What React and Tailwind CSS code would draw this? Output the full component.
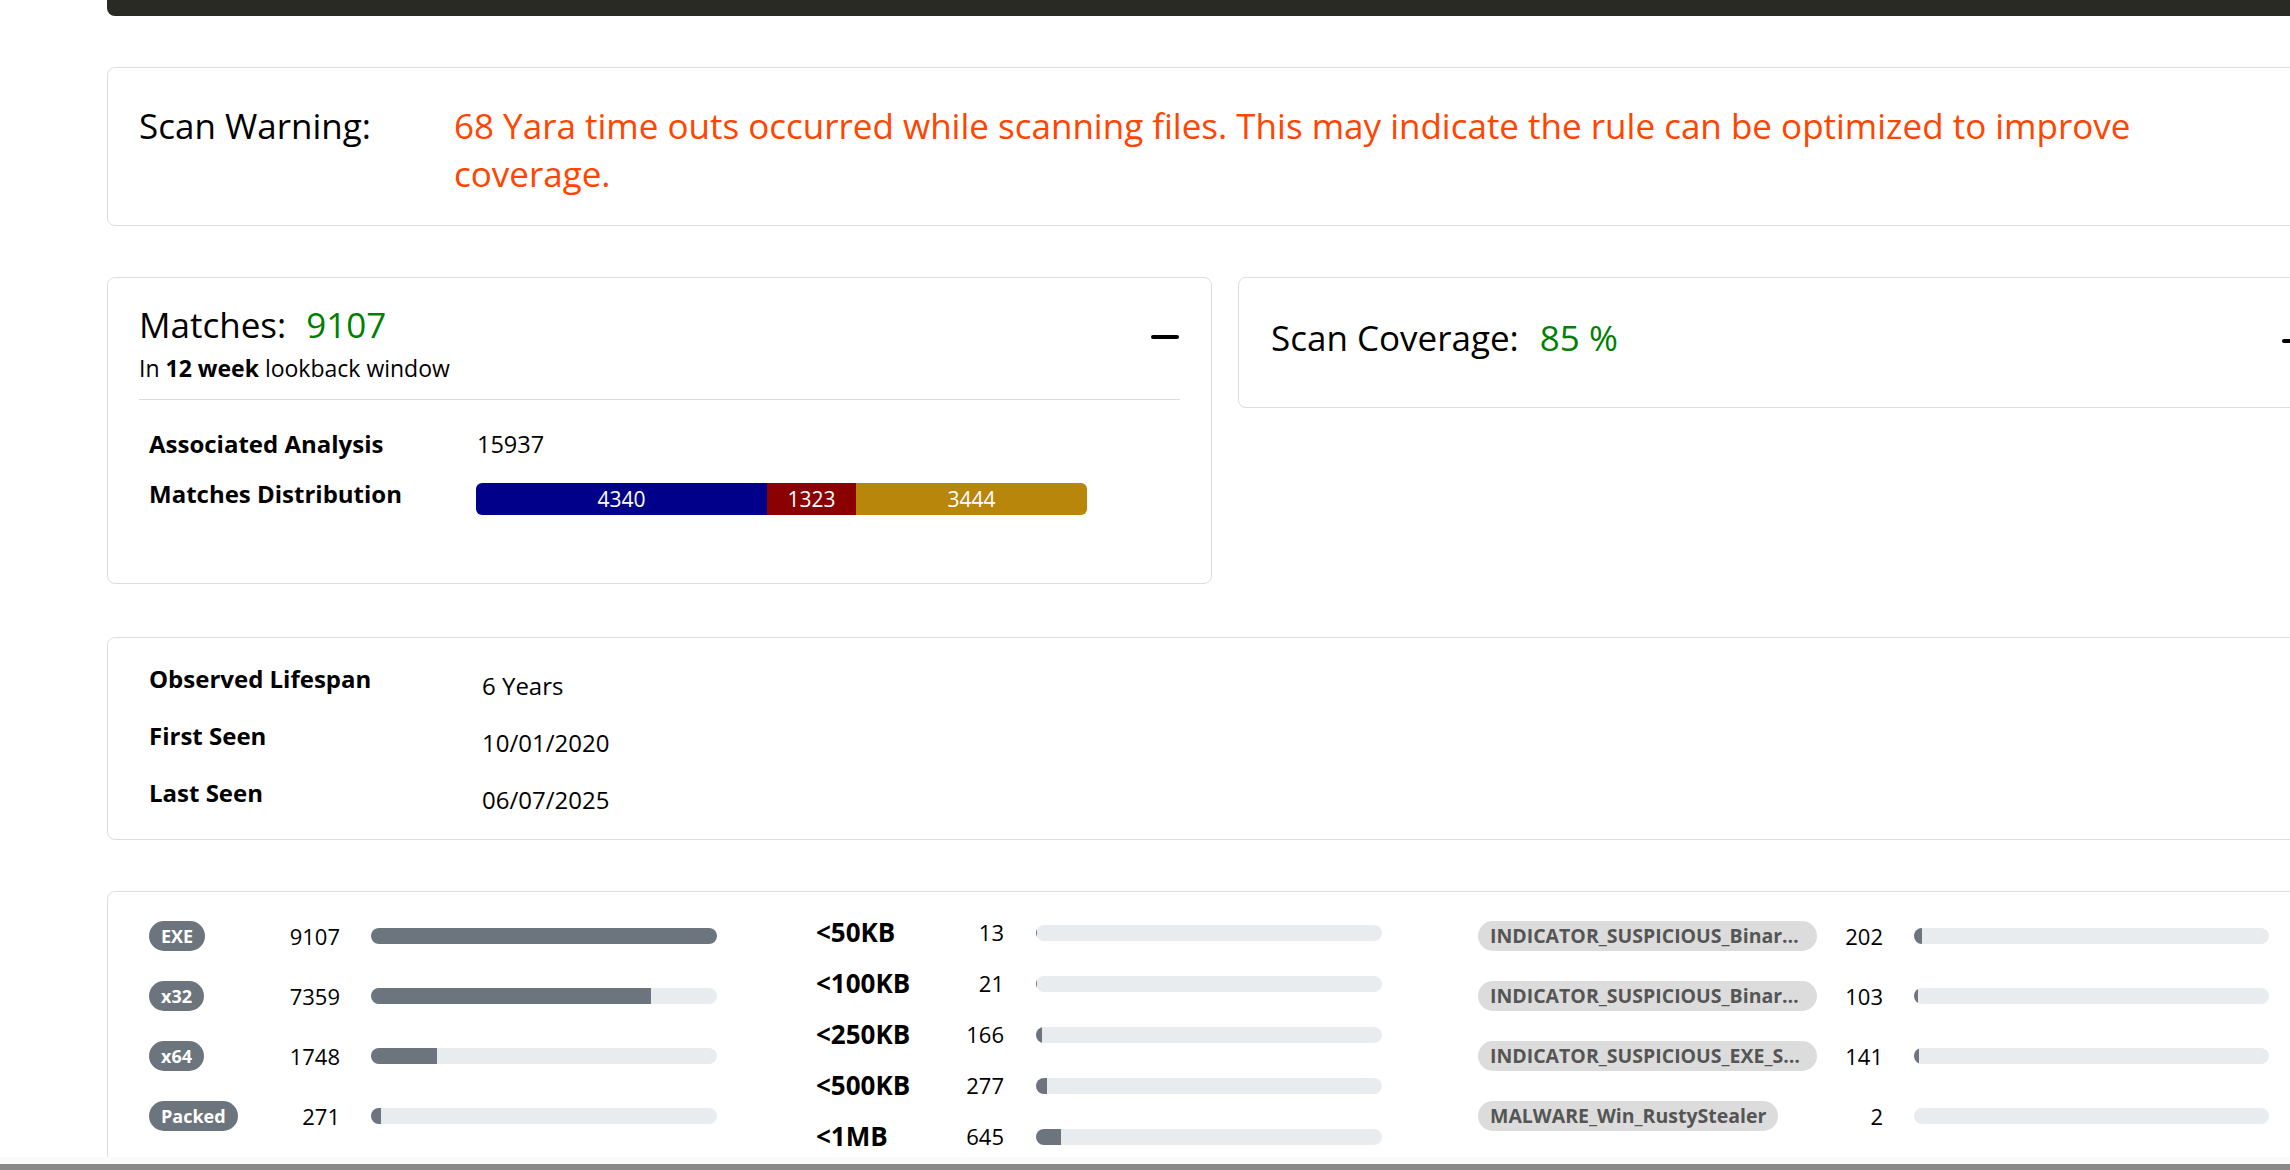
import React from 'react';

const fileTypes = [
  { name: 'EXE', count: 9107 },
  { name: 'x32', count: 7359 },
  { name: 'x64', count: 1748 },
  { name: 'Packed', count: 271 },
];

const sizes = [
  { name: '<50KB', count: 13 },
  { name: '<100KB', count: 21 },
  { name: '<250KB', count: 166 },
  { name: '<500KB', count: 277 },
  { name: '<1MB', count: 645 },
];

const rules = [
  { name: 'INDICATOR_SUSPICIOUS_Binary_References_Browsers', count: 202 },
  { name: 'INDICATOR_SUSPICIOUS_Binary_References_Crypto_Wallets', count: 103 },
  { name: 'INDICATOR_SUSPICIOUS_EXE_SQLQuery_ConfidentialDataStore', count: 141 },
  { name: 'MALWARE_Win_RustyStealer', count: 2 },
];

const TOTAL = 9107;

function Progress({ value, width }) {
  return (
    <div className="h-[16px] overflow-hidden rounded-full bg-[#e9ecef]" style={{ width }}>
      <div className="h-full bg-[#6c757d]" style={{ width: `${(value / TOTAL) * 100}%` }} />
    </div>
  );
}

function DashIcon() {
  return (
    <svg width="28" height="4" viewBox="0 0 28 4" className="block">
      <line x1="2" y1="2" x2="26" y2="2" stroke="#000" strokeWidth="4" strokeLinecap="round" />
    </svg>
  );
}

const card = 'rounded-[8px] border border-[#dedede] bg-white';

export default function App() {
  return (
    <div className="flex h-[1170px] w-full flex-col overflow-hidden bg-white font-['Open_Sans',sans-serif] text-black">
      <div className="h-[1157px] overflow-hidden">
        <div className="ml-[107px] w-[2236px]">
          {/* navbar tail */}
          <div className="h-[16px] rounded-b-[8px] bg-[#2a2a24]" />

          {/* scan warning */}
          <div className={`${card} mt-[51px] flex h-[159px] px-[31px] pt-[34px]`}>
            <div className="w-[315px] shrink-0 text-[35px] leading-[48px]">Scan Warning:</div>
            <div className="w-[1760px] text-[35px] leading-[48px] text-[#ff4500]">
              68 Yara time outs occurred while scanning files. This may indicate the rule can be optimized to improve coverage.
            </div>
          </div>

          {/* matches + coverage */}
          <div className="mt-[51px] grid grid-cols-2 items-start gap-[26px]">
            <div className={`${card} h-[307px] px-[31px] pt-[26px]`}>
              <div className="flex items-center justify-between">
                <div>
                  <div className="text-[35px] leading-[41px]">
                    Matches:<span className="ml-[20px] text-[#008000]">9107</span>
                  </div>
                  <div className="mt-[8px] text-[23px] leading-[30px]">
                    In <b>12 week</b> lookback window
                  </div>
                </div>
                <div className="mb-[13px] mr-[1px]">
                  <DashIcon />
                </div>
              </div>
              <div className="mt-[16px] border-t border-[#dcdcdc]" />
              <div className="mt-[28px] pl-[10px]">
                <div className="flex h-[50px]">
                  <div className="w-[328px] text-[24px] font-bold leading-[32px]">Associated Analysis</div>
                  <div className="text-[23.5px] leading-[32px]">15937</div>
                </div>
                <div className="flex h-[50px]">
                  <div className="w-[327px] text-[24px] font-bold leading-[32px]">Matches Distribution</div>
                  <div className="pt-[5px]">
                    <div className="flex h-[32px] w-[611px] overflow-hidden rounded-[6px] text-center text-[21px] leading-[32px] text-white">
                      <div className="bg-[#00008b]" style={{ width: `${(4340 / TOTAL) * 100}%` }}>4340</div>
                      <div className="bg-[#8b0000]" style={{ width: `${(1323 / TOTAL) * 100}%` }}>1323</div>
                      <div className="bg-[#b8860b]" style={{ width: `${(3444 / TOTAL) * 100}%` }}>3444</div>
                    </div>
                  </div>
                </div>
              </div>
            </div>

            <div className={`${card} flex h-[131px] justify-between px-[32px] pt-[39px]`}>
              <div className="text-[35px] leading-[41px]">
                Scan Coverage:<span className="ml-[21px] text-[#008000]">85 %</span>
              </div>
              <div className="pt-[22px]">
                <DashIcon />
              </div>
            </div>
          </div>

          {/* lifespan */}
          <div className={`${card} mt-[53px] h-[203px] pl-[41px] pt-[25px]`}>
            {[
              ['Observed Lifespan', '6 Years'],
              ['First Seen', '10/01/2020'],
              ['Last Seen', '06/07/2025'],
            ].map(([label, value]) => (
              <div key={label} className="flex h-[57px]">
                <div className="w-[333px] text-[24px] font-bold leading-[32px]">{label}</div>
                <div className="pt-[7px] text-[24px] leading-[32px]">{value}</div>
              </div>
            ))}
          </div>

          {/* distributions */}
          <div className={`${card} mt-[51px] flex h-[320px] pl-[41px]`}>
            <div className="w-[667px] shrink-0 pt-[14px]">
              {fileTypes.map((t) => (
                <div key={t.name} className="flex h-[60px] items-center">
                  <div className="w-[130px]">
                    <span className="inline-flex h-[30px] items-center rounded-full bg-[#6c757d] px-[12px] text-[18px] font-bold text-white">
                      {t.name}
                    </span>
                  </div>
                  <div className="w-[61px] text-right text-[22px]">{t.count}</div>
                  <div className="ml-[31px]">
                    <Progress value={t.count} width={346} />
                  </div>
                </div>
              ))}
            </div>

            <div className="w-[662px] shrink-0 pt-[15px]">
              {sizes.map((s) => (
                <div key={s.name} className="flex h-[51px] items-center">
                  <div className="w-[120px] text-[26px] font-bold">{s.name}</div>
                  <div className="w-[68px] text-right text-[22px]">{s.count}</div>
                  <div className="ml-[32px]">
                    <Progress value={s.count} width={346} />
                  </div>
                </div>
              ))}
            </div>

            <div className="flex-1 pt-[14px]">
              {rules.map((r) => (
                <div key={r.name} className="flex h-[60px] items-center">
                  <div className="w-[345px]">
                    <span className="inline-block h-[30px] max-w-[339px] truncate rounded-full bg-[#dcdcdc] px-[12px] align-middle text-[19.5px] font-bold leading-[30px] text-[#555]">
                      {r.name}
                    </span>
                  </div>
                  <div className="w-[60px] text-right text-[22px]">{r.count}</div>
                  <div className="ml-[31px]">
                    <Progress value={r.count} width={355} />
                  </div>
                </div>
              ))}
            </div>
          </div>
        </div>
      </div>
      <div className="h-[7px] bg-[#fafafa]" />
      <div className="h-[6px] bg-[#898989]" />
    </div>
  );
}
